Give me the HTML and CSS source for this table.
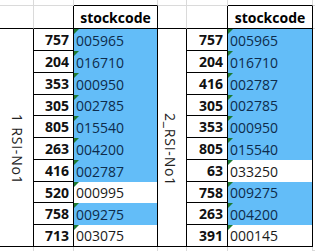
FILE: index.html
```html
<!DOCTYPE html>
<html>
<head>
<meta charset="utf-8">
<link rel="stylesheet" href="styles.css">
</head>
<body>
<div class="sheet">
  <!-- top strip -->
  <div class="c top g"></div><div class="c top g"></div><div class="c top gk"></div><div class="c top g"></div><div class="c top g"></div><div class="c top gk"></div><div class="c top tail"></div>
  <!-- header -->
  <div class="c hd hg"></div><div class="c hd hk"></div><div class="c hd hk title">stockcode</div><div class="c hd hg"></div><div class="c hd hk"></div><div class="c hd hk title">stockcode</div><div class="c hd tail"></div>

  <div class="label l1"><span>1 RSI-No1</span></div>
  <div class="label l2"><span>2_RSI-No1</span></div>

  <div class="c num r1 n1">757</div><div class="c code r1 k1 blue">005965</div>
  <div class="c num r2 n1">204</div><div class="c code r2 k1 blue">016710</div>
  <div class="c num r3 n1">353</div><div class="c code r3 k1 blue">000950</div>
  <div class="c num r4 n1">305</div><div class="c code r4 k1 blue">002785</div>
  <div class="c num r5 n1">805</div><div class="c code r5 k1 blue">015540</div>
  <div class="c num r6 n1">263</div><div class="c code r6 k1 blue">004200</div>
  <div class="c num r7 n1">416</div><div class="c code r7 k1 blue">002787</div>
  <div class="c num r8 n1">520</div><div class="c code r8 k1">000995</div>
  <div class="c num r9 n1">758</div><div class="c code r9 k1 blue">009275</div>
  <div class="c num r10 n1">713</div><div class="c code r10 k1 last">003075</div>

  <div class="c num r1 n2">757</div><div class="c code r1 k2 blue">005965</div>
  <div class="c num r2 n2">204</div><div class="c code r2 k2 blue">016710</div>
  <div class="c num r3 n2">416</div><div class="c code r3 k2 blue">002787</div>
  <div class="c num r4 n2">305</div><div class="c code r4 k2 blue">002785</div>
  <div class="c num r5 n2">353</div><div class="c code r5 k2 blue">000950</div>
  <div class="c num r6 n2">805</div><div class="c code r6 k2 blue">015540</div>
  <div class="c num r7 n2">63</div><div class="c code r7 k2">033250</div>
  <div class="c num r8 n2">758</div><div class="c code r8 k2 blue">009275</div>
  <div class="c num r9 n2">263</div><div class="c code r9 k2 blue">004200</div>
  <div class="c num r10 n2">391</div><div class="c code r10 k2 last">000145</div>

  <!-- bottom strip -->
  <div class="c bot g"></div><div class="c bot g"></div><div class="c bot g"></div><div class="c bot g"></div><div class="c bot g"></div><div class="c bot g"></div><div class="c bot tail"></div>
</div>
</body>
</html>
```
FILE: styles.css
```css
html, body {
  margin: 0;
  padding: 0;
  background: #ffffff;
}
.sheet {
  display: grid;
  grid-template-columns: 34px 40px 84px 29px 41px 85px 2px;
  grid-template-rows: 6px 23px 22px 22px 22px 21px 22px 22px 22px 21px 22px 22px 4px;
  width: 315px;
  height: 251px;
  overflow: hidden;
  font-family: "Open Sans", "Noto Sans", sans-serif;
  font-size: 14px;
  color: #111;
}
.c {
  box-sizing: border-box;
  display: flex;
  align-items: center;
  min-width: 0;
}
.top { grid-row: 1; }
.hd { grid-row: 2; }
.bot { grid-row: 13; }
.g { border-right: 1px solid #dadada; border-bottom: 1px solid #dadada; }
.gk { border-right: 1px solid #dadada; border-bottom: 1px solid #000; }
.bot.g { border-bottom: none; }
.tail { border-bottom: 1px solid #dadada; }
.hg { border-right: 1px solid #dadada; border-bottom: 1px solid #000; }
.hk { border-right: 1px solid #000; border-bottom: 1px solid #000; }
.title {
  justify-content: center;
  font-weight: 700;
  color: #000;
  padding-top: 1px;
}
.label {
  grid-row: 3 / 13;
  box-sizing: border-box;
  border-right: 1px solid #000;
  border-bottom: 1px solid #000;
  display: flex;
  align-items: center;
  justify-content: flex-start;
  padding-left: 8px;
  padding-top: 24px;
}
.l1 { grid-column: 1; }
.l2 { grid-column: 4; padding-left: 3px; }
.label span {
  writing-mode: vertical-rl;
  font-size: 14px;
  letter-spacing: 0.8px;
  color: #222;
}
.num {
  justify-content: flex-end;
  padding-right: 4px;
  font-weight: 700;
  color: #111;
  border-right: 1px solid #000;
  border-bottom: 1px solid #000;
}
.n1 { grid-column: 2; }
.n2 { grid-column: 5; }
.code {
  position: relative;
  padding-left: 2px;
  border-right: 1px solid #000;
  color: #1a1a1a;
}
.code::before {
  content: "";
  position: absolute;
  left: 0;
  top: 0;
  width: 0;
  height: 0;
  border-top: 5px solid #1d7a32;
  border-right: 5px solid transparent;
}
.k1 { grid-column: 3; }
.k2 { grid-column: 6; }
.blue { background: #63bdf8; color: #0e2c4c; }
.last { border-bottom: 1px solid #000; }
.r1 { grid-row: 3; } .r2 { grid-row: 4; } .r3 { grid-row: 5; } .r4 { grid-row: 6; } .r5 { grid-row: 7; }
.r6 { grid-row: 8; } .r7 { grid-row: 9; } .r8 { grid-row: 10; } .r9 { grid-row: 11; } .r10 { grid-row: 12; }
```
